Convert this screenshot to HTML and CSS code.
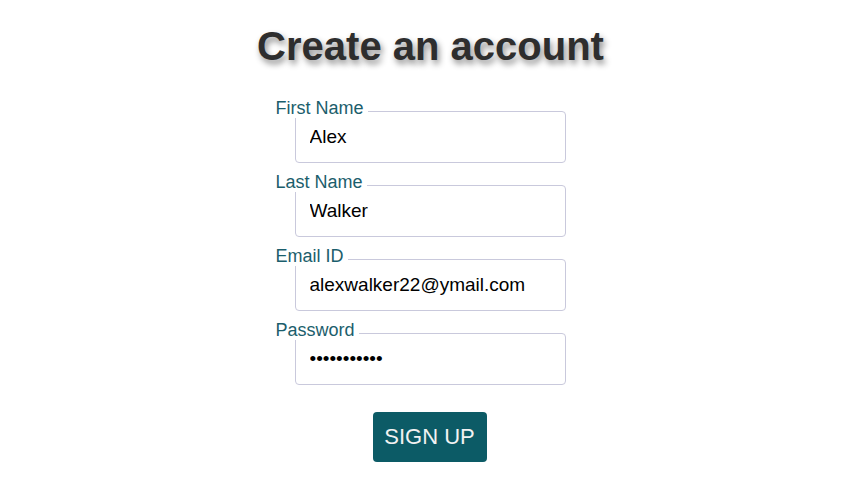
FILE: index.html
```html
<!DOCTYPE html>
<html lang="en">
<head>
<meta charset="utf-8">
<title>Create an account</title>
<link rel="stylesheet" href="styles.css">
</head>
<body>
<main class="page">
  <h1 class="title">Create an account</h1>
  <form class="form">
    <div class="field">
      <label class="field-label" for="first">First Name</label>
      <input class="field-input" id="first" type="text" value="Alex">
    </div>
    <div class="field">
      <label class="field-label" for="last">Last Name</label>
      <input class="field-input" id="last" type="text" value="Walker">
    </div>
    <div class="field">
      <label class="field-label" for="email">Email ID</label>
      <input class="field-input" id="email" type="email" value="alexwalker22@ymail.com">
    </div>
    <div class="field">
      <label class="field-label" for="pass">Password</label>
      <input class="field-input" id="pass" type="password" value="alexwalker1">
    </div>
    <div class="actions">
      <button class="btn" type="button">SIGN UP</button>
    </div>
  </form>
</main>
</body>
</html>
```
FILE: styles.css
```css
* { box-sizing: border-box; }
html, body {
  margin: 0;
  padding: 0;
  background: #ffffff;
  font-family: "Liberation Sans", Arial, sans-serif;
}
.page {
  display: flex;
  flex-direction: column;
  align-items: center;
  padding-right: 2px;
}
.title {
  margin: 23px 0 0;
  font-size: 40px;
  line-height: 46px;
  font-weight: bold;
  color: #2e2e2e;
  text-shadow: 2px 4px 6px rgba(0, 0, 0, 0.45);
}
.form {
  margin-top: 29px;
  width: 272px;
  display: flex;
  flex-direction: column;
}
.field {
  display: flex;
  flex-direction: column;
  align-items: flex-start;
  margin-bottom: 9px;
}
.field-label {
  position: relative;
  z-index: 1;
  margin-left: -19px;
  margin-bottom: -7px;
  padding-right: 4px;
  background: #ffffff;
  font-size: 18px;
  line-height: 20px;
  color: #1b5e6c;
}
.field-input {
  width: 271px;
  height: 52px;
  margin: 0;
  padding: 0 14px;
  border: 1px solid #c9c9dc;
  border-radius: 4px;
  background: #ffffff;
  font-family: "Liberation Sans", Arial, sans-serif;
  font-size: 19px;
  color: #000000;
  outline: none;
}
.actions {
  display: flex;
  justify-content: center;
  margin-top: 18px;
  padding-right: 2px;
}
.btn {
  width: 114px;
  height: 50px;
  padding: 0;
  border: none;
  border-radius: 4px;
  background: #0c5b66;
  color: #f2f2f2;
  font-family: "Liberation Sans", Arial, sans-serif;
  font-size: 22px;
  cursor: pointer;
}
```
